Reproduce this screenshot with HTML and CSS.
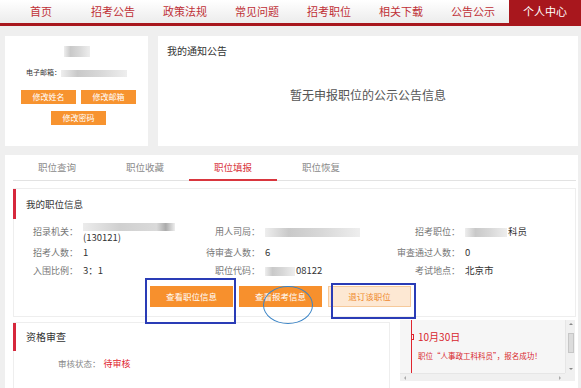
FILE: index.html
```html
<!DOCTYPE html>
<html lang="zh-CN">
<head>
    <meta charset="UTF-8" />
    <meta name="viewport" content="width=device-width, initial-scale=1.0"/>
    <title>个人中心</title>
    <link rel="stylesheet" href="styles.css">
</head>
<body>

<header class="topnav">
    <ul>
        <li>首页</li>
        <li>招考公告</li>
        <li>政策法规</li>
        <li>常见问题</li>
        <li>招考职位</li>
        <li>相关下载</li>
        <li>公告公示</li>
        <li class="active">个人中心</li>
    </ul>
</header>

<div class="page">

    <!-- 用户信息 + 通知 -->
    <div class="top-row">
        <div class="card user-card">
            <div class="blur name-blur"></div>
            <div class="email">电子邮箱：<span class="blur email-blur"></span></div>
            <div class="btn-row">
                <a class="small-btn">修改姓名</a>
                <a class="small-btn">修改邮箱</a>
            </div>
            <div class="btn-row">
                <a class="small-btn">修改密码</a>
            </div>
        </div>
        <div class="card notice-card">
            <h3>我的通知公告</h3>
            <p class="empty">暂无申报职位的公示公告信息</p>
        </div>
    </div>

    <div class="panel">
        <ul class="tabs">
            <li>职位查询</li>
            <li>职位收藏</li>
            <li class="current">职位填报</li>
            <li>职位恢复</li>
        </ul>

        <section class="box job-box">
            <h4 class="box-title">我的职位信息</h4>

            <div class="info-grid">
                <span class="label">招录机关：</span>
                <span class="value two-line"><span class="blur org-blur"></span><br>(130121)</span>
                <span class="label">用人司局：</span>
                <span class="value"><span class="blur dept-blur"></span></span>
                <span class="label">招考职位：</span>
                <span class="value"><span class="blur pos-blur"></span>科员</span>

                <span class="label">招考人数：</span>
                <span class="value">1</span>
                <span class="label">待审查人数：</span>
                <span class="value">6</span>
                <span class="label">审查通过人数：</span>
                <span class="value">0</span>

                <span class="label">入围比例：</span>
                <span class="value">3：1</span>
                <span class="label">职位代码：</span>
                <span class="value"><span class="blur code-blur"></span>08122</span>
                <span class="label">考试地点：</span>
                <span class="value">北京市</span>
            </div>

            <div class="actions">
                <a class="action-btn">查看职位信息</a>
                <a class="action-btn">查看报考信息</a>
                <a class="action-btn light">退订该职位</a>
            </div>

            <!-- 截图上的标注 -->
            <div class="mark mark-rect1"></div>
            <div class="mark mark-ellipse"></div>
            <div class="mark mark-rect2"></div>
        </section>

        <div class="bottom-row">
            <section class="box review-box">
                <h4 class="box-title">资格审查</h4>
                <div class="status"><span class="label">审核状态：</span><span class="pending">待审核</span></div>
            </section>

            <div class="timeline">
                <div class="tl-body">
                    <div class="tl-date"><i class="tl-dot"></i>10月30日</div>
                    <div class="tl-msg">职位“人事政工科科员”，报名成功！</div>
                </div>
                <div class="vscroll">
                    <span class="arrow up"></span>
                    <span class="thumb"></span>
                    <span class="arrow down"></span>
                </div>
                <div class="hscroll">
                    <span class="arrow left"></span>
                    <span class="arrow right"></span>
                </div>
                <div class="corner"></div>
            </div>
        </div>
    </div>
</div>

</body>
</html>
```

FILE: styles.css
```css
body {
    margin: 0;
    padding: 0;
    background: #efefef;
    font-family: "Noto Sans CJK SC", "Noto Sans", sans-serif;
    color: #333;
    height: 388px;
    overflow: hidden;
}

ul {
    list-style: none;
    margin: 0;
    padding: 0;
}

/* 顶部导航 */
.topnav {
    background: linear-gradient(#ffffff, #ececec);
    border-bottom: 3px solid #a8171d;
}

.topnav ul {
    display: grid;
    grid-template-columns: repeat(8, 72px);
    padding-left: 5px;
    height: 23px;
}

.topnav li {
    font-size: 11px;
    line-height: 23px;
    text-align: center;
    color: #bf3036;
}

.topnav li.active {
    background: #a8171d;
    color: #fff;
    height: 26px;
}

.page {
    padding: 10px 3px 0 5px;
}

.top-row {
    display: flex;
    gap: 10px;
    height: 110px;
}

.card {
    background: #fff;
}

.user-card {
    width: 143px;
    padding: 10px 0 0 4px;
    box-sizing: border-box;
    display: flex;
    flex-direction: column;
    align-items: center;
}

.blur {
    display: inline-block;
    background: linear-gradient(90deg, #eee, #c9c9c9 25%, #d8d8d8 60%, #eee);
    vertical-align: middle;
}

.name-blur {
    width: 26px;
    height: 11px;
    margin-right: 4px;
    margin-bottom: 11px;
}

.email {
    font-size: 7px;
    line-height: 9px;
    color: #333;
    margin-bottom: 13px;
    margin-right: 4px;
}

.email-blur {
    width: 66px;
    height: 7px;
}

.btn-row {
    display: flex;
    gap: 5px;
    margin-bottom: 7px;
}

.small-btn {
    display: block;
    width: 55px;
    height: 14px;
    line-height: 14px;
    background: #f7932f;
    color: #fff;
    font-size: 8px;
    text-align: center;
}

.notice-card {
    flex: 1;
    padding: 9px 9px 0;
}

.notice-card h3 {
    margin: 0;
    font-size: 10px;
    font-weight: normal;
    line-height: 12px;
    color: #333;
}

.empty {
    margin: 30px 0 0;
    text-align: center;
    font-size: 12px;
    line-height: 16px;
    color: #555;
}

/* 职位面板 */
.panel {
    margin-top: 9px;
    background: #fff;
    padding: 0 2px 0 8px;
    height: 240px;
    overflow: hidden;
}

.tabs {
    display: flex;
    height: 25px;
    border-bottom: 1px solid #e2e2e2;
}

.tabs li {
    width: 88px;
    text-align: center;
    font-size: 9.5px;
    line-height: 25px;
    color: #8a8a8a;
}

.tabs li.current {
    color: #d9363e;
    border-bottom: 2px solid #d9363e;
    height: 24px;
}

.box {
    border: 1px solid #eeeeee;
    background: #fff;
}

.box-title {
    margin: 0 0 0 -1px;
    border-left: 3px solid #d6283c;
    font-size: 9.5px;
    font-weight: normal;
    color: #333;
    padding-left: 10px;
}

.job-box {
    position: relative;
    margin-top: 7px;
    padding-bottom: 9px;
}

.job-box .box-title {
    line-height: 30px;
}

.info-grid {
    display: grid;
    grid-template-columns: 64px 117px 55px 125px 65px 1fr;
    grid-template-rows: 24px 18px 18px;
    column-gap: 5px;
    align-items: center;
    font-size: 9px;
}

.label {
    text-align: right;
    white-space: nowrap;
    color: #777;
}

.value {
    color: #333;
    white-space: nowrap;
    font-size: 9.5px;
}

.two-line {
    line-height: 11px;
    margin-top: 2px;
}

.org-blur {
    width: 92px;
    height: 8px;
    background: linear-gradient(90deg, #ececec, #d0d0d0 40%, #dadada 80%, #ababab 90%, #eee);
}

.dept-blur {
    width: 95px;
    height: 9px;
}

.pos-blur {
    width: 42px;
    height: 9px;
    margin-right: 1px;
}

.code-blur {
    width: 30px;
    height: 9px;
    margin-right: 1px;
}

.actions {
    display: flex;
    gap: 6px;
    padding-left: 136px;
    margin-top: 7px;
}

.action-btn {
    display: block;
    width: 83px;
    height: 21px;
    line-height: 21px;
    background: #f7902d;
    color: #fff;
    font-size: 8.5px;
    text-align: center;
    box-sizing: border-box;
}

.action-btn.light {
    background: #fde8d3;
    border: 1px solid #f6c99a;
    color: #ef8a2e;
    line-height: 19px;
}

.mark {
    position: absolute;
    box-sizing: border-box;
}

.mark-rect1 {
    left: 131px;
    top: 89px;
    width: 91px;
    height: 46px;
    border: 2px solid #2a3cb6;
}

.mark-rect2 {
    left: 317px;
    top: 94px;
    width: 85px;
    height: 36px;
    border: 2px solid #2a3cb6;
}

.mark-ellipse {
    left: 249px;
    top: 97px;
    width: 50px;
    height: 38px;
    border: 1.5px solid #3a84c6;
    border-radius: 50%;
}

.bottom-row {
    display: flex;
    gap: 10px;
    margin-top: 5px;
    align-items: flex-start;
}

.review-box {
    width: 377px;
    box-sizing: border-box;
    height: 90px;
}

.review-box .box-title {
    line-height: 28px;
    font-size: 10px;
    margin-top: 0;
}

.status {
    margin-top: 5px;
    padding-left: 44px;
    font-size: 8.5px;
    line-height: 14px;
}

.status .label {
    color: #888;
}

.pending {
    color: #e0262f;
    margin-left: 3px;
    font-size: 9px;
}

/* 时间轴 */
.timeline {
    width: 175px;
    height: 61px;
    display: grid;
    grid-template-columns: 1fr 10px;
    grid-template-rows: 1fr 8px;
    background: #f6f6f6;
    margin-top: -2px;
}

.tl-body {
    position: relative;
    margin-left: 11px;
    border-left: 1.5px solid #e0262f;
    padding-left: 6px;
    overflow: hidden;
}

.tl-date {
    position: relative;
    margin-top: 11px;
    font-size: 10px;
    line-height: 12px;
    color: #d8262e;
}

.tl-dot {
    position: absolute;
    left: -10px;
    top: 3px;
    width: 4px;
    height: 4px;
    border: 1.5px solid #e0262f;
    background: #f6f6f6;
}

.tl-msg {
    margin-top: 8px;
    font-size: 7.5px;
    line-height: 10px;
    color: #d8262e;
    white-space: nowrap;
}

.vscroll {
    background: #f0f0f0;
    border-left: 1px solid #e6e6e6;
    display: flex;
    flex-direction: column;
    align-items: center;
    justify-content: space-between;
    padding: 3px 0;
}

.thumb {
    width: 6px;
    height: 20px;
    background: #dcdcdc;
    border: 1px solid #c6c6c6;
    box-sizing: border-box;
    margin-top: -8px;
}

.hscroll {
    background: #f0f0f0;
    border-top: 1px solid #e6e6e6;
    display: flex;
    align-items: center;
    justify-content: space-between;
    padding: 0 4px;
}

.corner {
    background: #f0f0f0;
}

.arrow {
    width: 0;
    height: 0;
    border: 2px solid transparent;
}

.arrow.up {
    border-bottom-color: #888;
    border-top-width: 0;
}

.arrow.down {
    border-top-color: #888;
    border-bottom-width: 0;
}

.arrow.left {
    border-right-color: #aaa;
    border-left-width: 0;
}

.arrow.right {
    border-left-color: #aaa;
    border-right-width: 0;
}
```
